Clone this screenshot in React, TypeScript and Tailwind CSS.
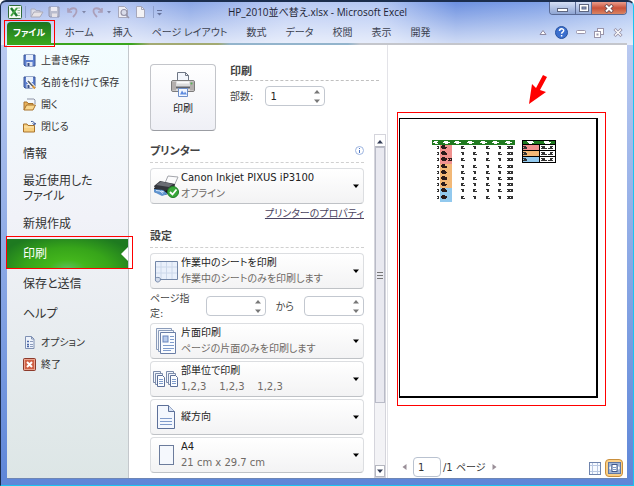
import { useId } from 'react'
import type { ReactNode } from 'react'

const tabs = ['ホーム', '挿入', 'ページ レイアウト', '数式', 'データ', '校閲', '表示', '開発']

/* ---------- small icons ---------- */

function ExcelIcon() {
  return (
    <svg width="14" height="14" viewBox="0 0 14 14">
      <rect x="0.5" y="0.5" width="13" height="13" rx="1" fill="#f4faf2" stroke="#2f6b3a" />
      <path d="M9 3h3M9.5 5.5H12M9.5 8H12M9 10.5h3" stroke="#8fb58f" />
      <path d="M3 3l6 8" stroke="#1d7a2d" strokeWidth="2.4" />
      <path d="M9 3l-6 8" stroke="#45a543" strokeWidth="2" />
    </svg>
  )
}

function QuickIcons() {
  return (
    <svg width="142" height="16" viewBox="0 0 142 16" fill="none">
      <path d="M2.5 2v12" stroke="#8fa0cc" />
      {/* open */}
      <path d="M8 13V5h4l1 1.500h4V8" fill="#dcdde6" stroke="#a9acbf" />
      <path d="M8 13l3-5h9l-3 5z" fill="#e6e2e4" stroke="#aaa9b8" />
      {/* save */}
      <path d="M26 3h10v10H27l-1-1z" fill="#b9bccd" stroke="#9396ae" />
      <path d="M28 3h6v4h-6z" fill="#eceaf2" />
      <path d="M29 9.500h5V13h-5z" fill="#e6e2e6" />
      {/* undo */}
      <path d="M45 4v4h4" stroke="#ab9fb9" strokeWidth="1.600" />
      <path d="M45.500 7.500c2-4 8-4.500 8-.5 0 2-1.500 4-3.500 6" stroke="#ab9fb9" strokeWidth="1.800" />
      <path d="M59 7h4l-2 2.500z" fill="#8087a8" />
      {/* redo */}
      <path d="M79 4v4h-4" stroke="#ab9fb9" strokeWidth="1.600" />
      <path d="M78.500 7.500c-2-4-8-4.500-8-.5 0 2 1.500 4 3.500 6" stroke="#ab9fb9" strokeWidth="1.800" />
      <path d="M84 7h4l-2 2.500z" fill="#8087a8" />
      {/* preview */}
      <path d="M95.500 2.500h6l3 3v8h-9z" fill="#efeef4" stroke="#a7a8bb" />
      <circle cx="101" cy="8.500" r="3" fill="#d9dcea" stroke="#9694a8" strokeWidth="1.200" />
      <path d="M103 11l3 3" stroke="#9694a8" strokeWidth="1.600" />
      {/* new */}
      <path d="M113.500 2.500h5l3 3v8h-8z" fill="#f3f2f5" stroke="#a7a8bb" />
      <path d="M118.500 2.500v3h3" stroke="#a7a8bb" />
      <path d="M130.500 2v12" stroke="#8fa0cc" />
      <path d="M134 6.500h5" stroke="#66729c" />
      <path d="M134 9h5l-2.500 2.500z" fill="#66729c" />
    </svg>
  )
}

function SaveIcon({ pen = false }: { pen?: boolean }) {
  return (
    <svg width="13" height="13" viewBox="0 0 13 13">
      <path d="M1 1h11v11H2l-1-1z" fill="#5d80cf" stroke="#3c5696" />
      <rect x="3" y="1" width="7" height="5" fill="#e8f0fc" />
      <path d="M3.500 8h6v4h-6z" fill="#dfe5f2" />
      <path d="M4.500 9h2v3h-2z" fill="#394f85" />
      {pen && (
        <>
          <path d="M5 5l6.500 7" stroke="#fff" strokeWidth="3.400" />
          <path d="M5 5l6 6.500" stroke="#555b66" strokeWidth="1.600" />
          <path d="M9.500 10l2.500 2.500" stroke="#d8973a" strokeWidth="2" />
        </>
      )}
    </svg>
  )
}

function OpenIcon() {
  return (
    <svg width="13" height="13" viewBox="0 0 13 13">
      <path d="M4 1h7l1 1v4" fill="#f4f7fc" stroke="#8c93a5" />
      <path d="M1 12V4h3l1 1.500h5V8" fill="#e8b35c" stroke="#a8732c" />
      <path d="M1 12l2.500-5H12.500l-2.500 5z" fill="#f9d88f" stroke="#a8732c" />
    </svg>
  )
}

function CloseFolderIcon() {
  return (
    <svg width="13" height="13" viewBox="0 0 13 13">
      <path d="M.5 12V4h3.500l1 1.500h6.500V12z" fill="#f7cf7f" stroke="#a8732c" />
      <path d="M1 7h10" stroke="#fdeab9" />
      <path d="M8 1.500c2-.5 3.500.5 3.500 3M11.500 5l-2-1.500M11.500 5l1.500-2" stroke="#3c5696" fill="none" />
    </svg>
  )
}

function OptionIcon() {
  return (
    <svg width="13" height="13" viewBox="0 0 13 13">
      <path d="M2.500.5h6l2.500 2.500v9.500H2.500z" fill="#eef3fb" stroke="#7f90b3" />
      <path d="M8.500.5V3H11" fill="none" stroke="#7f90b3" />
      <path d="M4 5.500h2M4 8.500h2M4 10.500h2" stroke="#4a68a8" strokeWidth="1.400" />
      <path d="M7 5.500h3M7 8.500h3M7 10.500h3" stroke="#8c9cbd" />
    </svg>
  )
}

function ExitIcon() {
  return (
    <svg width="13" height="13" viewBox="0 0 13 13">
      <rect x=".5" y=".5" width="12" height="12" rx="1" fill="#cf6044" stroke="#8c3a2b" />
      <rect x="1.500" y="1.500" width="10" height="10" fill="none" stroke="#eba48f" />
      <path d="M4 4l5 5M9 4l-5 5" stroke="#fff" strokeWidth="2" />
    </svg>
  )
}

function Triangle({ dir, className = '' }: { dir: 'up' | 'down' | 'left' | 'right'; className?: string }) {
  const d = {
    up: 'M0 5.500h6l-3-3.500z',
    down: 'M0 1.500h6l-3 3.500z',
    left: 'M5.500 0v6l-4-3z',
    right: 'M.5 0v6l4-3z',
  }[dir]
  return (
    <svg width="6" height="6" viewBox="0 0 6 6" className={className}>
      <path d={d} fill="currentColor" />
    </svg>
  )
}

/* ---------- large icons ---------- */

function PrinterIcon() {
  return (
    <svg width="24" height="25" viewBox="0 0 24 25">
      <path d="M6.500 9V.5h8l3 3V9z" fill="#f3f6fc" stroke="#6e7685" />
      <path d="M14.500.5v3h3" fill="none" stroke="#6e7685" />
      <rect x=".5" y="8.500" width="23" height="11" rx="1.500" fill="#dcdcdc" stroke="#7d7c7c" />
      <path d="M1 9.500h4v9H1zM19 9.500h4v9h-4z" fill="#b3aeac" />
      <path d="M6 10.500h12" stroke="#fafafa" strokeWidth="2" />
      <path d="M5 14.500h14v2H5z" fill="#62646b" />
      <path d="M7.500 16.500h9v8h-9z" fill="#f2f7ff" stroke="#6e8fc9" />
      <path d="M9 22.500l2-4 2 3 1-2 2 3z" fill="#5d8be0" />
      <circle cx="20.500" cy="11.500" r="1" fill="#55b355" />
    </svg>
  )
}

function DeviceIcon() {
  return (
    <svg width="26" height="23" viewBox="0 0 26 23">
      <path d="M12 8l3-7 10 1-4 9z" fill="#fbfbfc" stroke="#a3a5ab" />
      <path d="M1 11l6-5 15 3-1 6-8 4-10-3z" fill="#33363c" />
      <path d="M3 10l5-3.500 12 2.500-4 3z" fill="#6a6d74" />
      <path d="M1 13l11 3 7-3v4l-7 3-11-3z" fill="#17191d" />
      <path d="M1 14l9 1 5 4-6 2-8-4z" fill="#5f93cf" />
      <path d="M3 15.500l4 .5 3 2.500M8 16l3 1" stroke="#d7e9fa" fill="none" />
      <circle cx="20" cy="17" r="5.500" fill="#39a839" stroke="#1f7c26" />
      <path d="M17 17l2.500 2.500 4-5" stroke="#fff" strokeWidth="1.800" fill="none" />
    </svg>
  )
}

function SheetIcon() {
  return (
    <svg width="25" height="23" viewBox="0 0 25 23">
      <path d="M1.500 1.500h22v18H5.500V21H1.500z" fill="#e9f0fb" />
      <path d="M1.500 7h22M1.500 13h22M7 1.500v18M12.500 1.500v18M18 1.500v18" stroke="#ccd8ea" />
      <path d="M1.500 19V1.500h22v18H6" fill="none" stroke="#7387a8" />
      <path d="M1.500 18.500c0-1.500 5-1.500 5 .5s-1.500 3-3 3-2.500-1.500-2-3.500z" fill="#d3dcec" stroke="#7387a8" />
    </svg>
  )
}

function OneSideIcon() {
  return (
    <svg width="22" height="26" viewBox="0 0 22 26">
      <path d="M1.500.5h15v21h-15z" fill="#f1f5fc" stroke="#8b9cba" />
      <path d="M3.500 2.500h15v21h-15z" fill="#f6f9fe" stroke="#8b9cba" />
      <path d="M5.500 4.500h15v21h-15z" fill="#fafcff" stroke="#6a7ea6" />
      <rect x="8" y="8" width="5" height="6" fill="#b8cbec" stroke="#6a86bd" />
      <path d="M15 8.500h4M15 11.500h4M15 14.500h4M8 17.500h11M8 20.500h11M8 22.500h8" stroke="#7f9bcb" />
    </svg>
  )
}

function StackedPages() {
  return (
    <>
      <path d="M.5.5h7v11h-7z" fill="#f1f5fc" stroke="#7d8dab" />
      <path d="M2.500 2.500h7v11h-7z" fill="#f1f5fc" stroke="#7d8dab" />
      <path d="M4.500 4.500h5l2 2v9h-7z" fill="#fbfdff" stroke="#5d7099" />
      <path d="M6 8.500h4M6 10.500h4M6 12.500h4" stroke="#7f9bcb" />
    </>
  )
}

function CollateIcon() {
  return (
    <svg width="26" height="16" viewBox="0 0 26 16">
      <StackedPages />
      <g transform="translate(13 0)">
        <StackedPages />
      </g>
    </svg>
  )
}

function PortraitIcon() {
  return (
    <svg width="18" height="24" viewBox="0 0 18 24">
      <path d="M.5.5h11l6 6v17H.5z" fill="#f3f7fe" stroke="#5d7099" />
      <path d="M11.500.5v6h6" fill="#d6e1f4" stroke="#5d7099" />
      <path d="M3 13.500h12M3 16.500h12M3 19.500h12" stroke="#7f9bcb" />
    </svg>
  )
}

function PaperIcon() {
  return (
    <svg width="15" height="20" viewBox="0 0 15 20">
      <rect x=".5" y=".5" width="14" height="19" fill="#f5f8fd" stroke="#6c7c9c" />
    </svg>
  )
}

/* ---------- form parts ---------- */

function Spinner({ id, value = '' }: { id: string; value?: string }) {
  return (
    <span className="flex h-5 w-[60px] items-center rounded-sm border border-[#c3c8d0] bg-white pr-1">
      <input
        id={id}
        type="text"
        defaultValue={value}
        className="min-w-0 flex-1 bg-transparent pl-1 text-[10px] text-[#222] outline-none"
      />
      <span className="flex flex-col gap-1 text-[#777]">
        <button type="button" aria-label="増やす" className="block">
          <Triangle dir="up" className="block" />
        </button>
        <button type="button" aria-label="減らす" className="block">
          <Triangle dir="down" className="block" />
        </button>
      </span>
    </span>
  )
}

function Picker({ icon, title, note }: { icon: ReactNode; title: string; note?: string }) {
  return (
    <label className="flex h-9 items-center rounded-sm border border-[#dcdee1] border-b-[#bfc2c6] bg-linear-to-b from-white to-[#f3f3f4] pr-1">
      <span className="flex w-[30px] shrink-0 justify-center">{icon}</span>
      <span className="flex min-w-0 flex-1 flex-col">
        <select className="h-4 w-full appearance-none bg-transparent text-[10px] leading-4 text-[#222] outline-none">
          <option>{title}</option>
        </select>
        {note && <span className="text-[10px] leading-4 whitespace-pre text-[#6f6a66]">{note}</span>}
      </span>
      <Triangle dir="down" className="shrink-0 text-black" />
    </label>
  )
}

function SectionTitle({ children }: { children: ReactNode }) {
  return (
    <h2 className="border-b border-dashed border-[#d0d0d0] pt-0.5 pb-0.5 text-[11px] leading-4 font-bold text-[#444]">
      {children}
    </h2>
  )
}

/* ---------- title bar and ribbon ---------- */

function TitleBar() {
  return (
    <div className="flex h-5 items-start">
      <div className="flex flex-1 items-center gap-px pt-0.5 pl-px">
        <ExcelIcon />
        <QuickIcons />
      </div>
      <h1 className="pt-0.5 text-[10px] leading-4 whitespace-nowrap text-[#1c2333]">
        HP_2010並べ替え.xlsx - Microsoft Excel
      </h1>
      <div className="flex flex-1 justify-end">
        <div className="flex h-[13px] overflow-hidden rounded-b-sm border border-t-0 border-[#5a6a94]">
          <button
            type="button"
            aria-label="最小化"
            className="flex w-[26px] items-center justify-center border-r border-[#5a6a94] bg-linear-to-b from-[#d5dff5] to-[#8ea4d2]"
          >
            <svg width="11" height="8" viewBox="0 0 11 8">
              <rect x=".5" y="4.500" width="10" height="3" fill="#fff" stroke="#5e6680" />
            </svg>
          </button>
          <button
            type="button"
            aria-label="元に戻す"
            className="flex w-[16px] items-center justify-center border-r border-[#5a6a94] bg-linear-to-b from-[#d5dff5] to-[#8ea4d2]"
          >
            <svg width="10" height="8" viewBox="0 0 10 8">
              <rect x=".5" y=".5" width="9" height="7" fill="#fff" stroke="#5e6680" />
              <rect x="3" y="3" width="4" height="2" fill="#8ea4d2" stroke="#5e6680" />
            </svg>
          </button>
          <button
            type="button"
            aria-label="閉じる"
            className="flex w-[34px] items-center justify-center bg-linear-to-b from-[#eb9d8c] via-[#c9513a] to-[#d98462]"
          >
            <svg width="10" height="9" viewBox="0 0 10 9">
              <path d="M1.500 1l7 7M8.500 1l-7 7" stroke="#6b4a50" strokeWidth="3.600" />
              <path d="M2 1.500l6 6M8 1.500l-6 6" stroke="#fff" strokeWidth="2" />
            </svg>
          </button>
        </div>
      </div>
    </div>
  )
}

function Ribbon() {
  return (
    <nav className="flex h-[21px] items-stretch">
      <div className="relative w-11">
        <a
          href="#file"
          className="flex h-full items-center justify-center rounded-t-sm bg-linear-to-b from-[#1b741f] to-[#3aa51d] text-[9px] font-bold text-white"
        >
          ファイル
        </a>
        <span className="absolute -top-0.5 -right-1 -bottom-1 -left-[3px] border border-[#f00]" />
      </div>
      <div className="flex items-center gap-[19px] pl-3.5">
        {tabs.map((tab) => (
          <a key={tab} href="#tab" className="text-[10px] whitespace-nowrap text-[#3c4250]">
            {tab}
          </a>
        ))}
      </div>
      <div className="ml-auto flex items-center gap-2 pr-1">
        <svg width="8" height="7" viewBox="0 0 8 7">
          <path d="M1 5.500L4 1.500l3 4z" fill="#fff" stroke="#8d88a0" />
        </svg>
        <svg width="13" height="13" viewBox="0 0 13 13">
          <circle cx="6.500" cy="6.500" r="6" fill="#3b6fce" stroke="#27529f" />
          <path
            d="M4.500 5c0-3 4.200-2.800 4.200-.4 0 1.500-2.100 1.500-2.100 3.100M6.600 9v1.500"
            stroke="#fff"
            strokeWidth="1.500"
            fill="none"
          />
        </svg>
        <svg width="10" height="5" viewBox="0 0 10 5">
          <rect x=".5" y=".5" width="9" height="3" rx="1" fill="#fff" stroke="#9a95aa" />
        </svg>
        <svg width="11" height="10" viewBox="0 0 11 10">
          <rect x="3.500" y=".5" width="6" height="6" fill="#fff" stroke="#9a95aa" />
          <rect x=".5" y="3.500" width="6" height="6" fill="#fff" stroke="#9a95aa" />
          <rect x="2.500" y="5.500" width="2" height="2" fill="#9a95aa" />
        </svg>
        <svg width="10" height="9" viewBox="0 0 10 9">
          <path d="M1.500 1l7 7M8.500 1l-7 7" stroke="#9a95aa" strokeWidth="3" />
          <path d="M2 1.500l6 6M8 1.500l-6 6" stroke="#fff" strokeWidth="1.200" />
        </svg>
      </div>
    </nav>
  )
}

/* ---------- left menu ---------- */

function MenuCommand({ icon, label }: { icon: ReactNode; label: string }) {
  return (
    <a href="#command" className="flex h-[22px] items-center gap-[5px] pl-4 text-[10px] whitespace-nowrap text-[#333]">
      {icon}
      {label}
    </a>
  )
}

function MenuPage({ children }: { children: ReactNode }) {
  return (
    <a href="#page" className="flex min-h-[30px] items-center py-[5px] pl-4 text-[12px] leading-[15px] text-[#333]">
      <span>{children}</span>
    </a>
  )
}

function Sidebar() {
  return (
    <aside className="w-[122px] shrink-0 border-r border-[#c4c8cc] bg-linear-to-b from-[#f3fdff] via-[#f1f2f8] via-40% to-[#dde6e6] pt-1">
      <MenuCommand icon={<SaveIcon />} label="上書き保存" />
      <MenuCommand icon={<SaveIcon pen />} label="名前を付けて保存" />
      <MenuCommand icon={<OpenIcon />} label="開く" />
      <MenuCommand icon={<CloseFolderIcon />} label="閉じる" />
      <div className="py-0.5">
        <MenuPage>情報</MenuPage>
        <MenuPage>
          最近使用した
          <br />
          ファイル
        </MenuPage>
        <MenuPage>新規作成</MenuPage>
        <div className="relative">
          <a
            href="#print"
            className="flex h-[30px] items-center justify-between bg-[radial-gradient(ellipse_at_bottom,#5cc05c_0%,#43b51c_22%,#37a51a_50%,#1e7a20_85%)] pl-4 text-[12px] text-white"
          >
            印刷
            <svg width="7" height="14" viewBox="0 0 7 14">
              <path d="M7 0v14L0 7z" fill="#fff" />
            </svg>
          </a>
          <span className="absolute -top-[3px] -right-[5px] bottom-0 -left-px border border-[#f00]" />
        </div>
        <MenuPage>保存と送信</MenuPage>
        <MenuPage>ヘルプ</MenuPage>
      </div>
      <MenuCommand icon={<OptionIcon />} label="オプション" />
      <MenuCommand icon={<ExitIcon />} label="終了" />
    </aside>
  )
}

/* ---------- print settings ---------- */

function ScrollBar() {
  return (
    <div className="flex w-3 shrink-0 flex-col border border-[#d5d5dc] bg-[#f3f3f6]">
      <button type="button" aria-label="上へ" className="flex h-3 items-center justify-center border-b border-[#b5b7c0] bg-white text-[#333c55]">
        <Triangle dir="up" />
      </button>
      <div className="flex h-64 flex-col items-center justify-center gap-0.5 border border-[#b9bbc7] bg-[#e9e9f0]">
        <span className="h-px w-1.5 bg-[#777]" />
        <span className="h-px w-1.5 bg-[#777]" />
        <span className="h-px w-1.5 bg-[#777]" />
      </div>
      <button type="button" aria-label="下へ" className="mt-auto flex h-3 items-center justify-center border border-[#b5b7c0] bg-white text-[#333c55]">
        <Triangle dir="down" />
      </button>
    </div>
  )
}

function PrintSettings() {
  const copies = useId()
  const from = useId()
  const to = useId()

  return (
    <section className="flex w-[259px] shrink-0 flex-col border-r border-[#e3e3e8] pt-[19px] pl-[21px]">
      <div className="flex gap-3.5 pr-2">
        <button
          type="button"
          className="flex h-[67px] w-[66px] flex-col items-center justify-center gap-1 rounded-sm border border-[#c3c5ca] border-b-[#9b9da3] bg-linear-to-b from-white to-[#eff0f6] pb-2 text-[10px] text-[#222]"
        >
          <PrinterIcon />
          印刷
        </button>
        <div className="flex-1">
          <h2 className="border-b border-dashed border-[#c0c0c0] text-[11px] leading-4 font-bold text-[#444]">印刷</h2>
          <div className="flex items-center gap-3 pt-[5px]">
            <label htmlFor={copies} className="text-[10px] text-[#444]">
              部数:
            </label>
            <Spinner id={copies} value="1" />
          </div>
        </div>
      </div>

      <div className="flex flex-1 gap-2.5 pt-[3px] pr-px">
        <div className="min-w-0 flex-1 pt-2">
          <div className="relative">
            <SectionTitle>プリンター</SectionTitle>
            <svg width="9" height="9" viewBox="0 0 9 9" className="absolute top-1 right-0">
              <circle cx="4.500" cy="4.500" r="4" fill="#fff" stroke="#9db4e0" />
              <path d="M4.500 2v1M4.500 4v3" stroke="#4f76c4" />
            </svg>
          </div>
          <div className="pt-[5px]">
            <Picker icon={<DeviceIcon />} title="Canon Inkjet PIXUS iP3100" note="オフライン" />
          </div>
          <p className="pt-0.5 text-right text-[10px] leading-4">
            <a href="#property" className="text-[#4b4360] underline">
              プリンターのプロパティ
            </a>
          </p>
          <div className="pt-[5px]">
            <SectionTitle>設定</SectionTitle>
          </div>
          <div className="flex flex-col gap-0.5 pt-[5px]">
            <Picker icon={<SheetIcon />} title="作業中のシートを印刷" note="作業中のシートのみを印刷します" />
            <div className="flex items-center justify-between text-[10px] text-[#444]">
              <label htmlFor={from} className="w-[42px] leading-[15px]">
                ページ指定:
              </label>
              <div className="flex items-center gap-2.5">
                <Spinner id={from} />
                <label htmlFor={to}>から</label>
                <Spinner id={to} />
              </div>
            </div>
            <Picker icon={<OneSideIcon />} title="片面印刷" note="ページの片面のみを印刷します" />
            <Picker icon={<CollateIcon />} title="部単位で印刷" note="1,2,3    1,2,3    1,2,3" />
            <Picker icon={<PortraitIcon />} title="縦方向" />
            <Picker icon={<PaperIcon />} title="A4" note="21 cm x 29.7 cm" />
          </div>
        </div>
        <ScrollBar />
      </div>
    </section>
  )
}

/* ---------- preview ---------- */

const rowFills = ['#f0918e', '#f0918e', '#f0918e', '#f2b877', '#f2b877', '#f2b877', '#f2b877', '#92c9ee', '#92c9ee']
const numberX = [29, 41, 54, 66]

// The printed sheet, reduced until its cells are only marks
function SheetThumbnail() {
  return (
    <svg width="125" height="62" viewBox="0 0 125 62" shapeRendering="crispEdges">
      <rect x="0" y="0" width="83" height="5" fill="#1f7a1f" />
      {[1, 11, 22, 35, 48, 60, 73].map((x, i) => (
        <path key={x} d={`M${x} 2.5h${i === 0 ? 4 : 7}M${x + 1} 1.5h4M${x + 2} 3.5h3`} stroke="#fff" />
      ))}
      {rowFills.map((fill, i) => {
        const y = 5 + Math.round(i * 6.2)
        return (
          <g key={i}>
            <rect x="8" y={y} width="12" height="7" fill={fill} />
            <path d={`M5 ${y + 1.5}h2M6 ${y + 2.5}h1M5 ${y + 3.5}h2`} stroke="#333" />
            <path
              d={`M10 ${y + 0.5}h3M9 ${y + 1.5}h${4 + (i % 3)}M9 ${y + 2.5}h6M10 ${y + 3.5}h${4 + (i % 2)}`}
              stroke="#2a1a1a"
            />
            {i === 2 && <path d={`M16 ${y + 1.5}h4M17 ${y + 2.5}h1M19 ${y + 2.5}h1M16 ${y + 3.5}h4`} stroke="#2a1a1a" />}
            {numberX.map((x, j) => (
              <path
                key={x}
                d={
                  (i + j) % 2
                    ? `M${x} ${y + 1.5}h3M${x + 1} ${y + 2.5}h2M${x + 1} ${y + 3.5}h2`
                    : `M${x} ${y + 1.5}h3M${x} ${y + 2.5}h2M${x} ${y + 3.5}h4`
                }
                stroke="#333"
              />
            ))}
            <path d={`M75 ${y + 1.5}h6M76 ${y + 2.5}h2M79 ${y + 2.5}h2M75 ${y + 3.5}h6`} stroke="#333" />
          </g>
        )
      })}

      <rect x="90" y="0" width="34" height="5" fill="#1f7a1f" />
      <path d="M95 1.5h6M96 2.5h6M97 3.5h3M112 1.500h5M112 2.500h7M113 3.500h5" stroke="#fff" />
      {['#f0918e', '#f2b877', '#92c9ee'].map((fill, i) => {
        const y = 4 + i * 6
        return (
          <g key={fill}>
            <rect x="90.5" y={y + 0.5} width="17" height="6" fill={fill} stroke="#000" />
            <rect x="107.5" y={y + 0.5} width="16" height="6" fill="#fff" stroke="#000" />
            <path
              d={`M91 ${y + 2.5}h3M92 ${y + 3.5}h3M91 ${y + 4.5}h4M109 ${y + 2.5}h4M110 ${y + 3.5}h3M109 ${y + 4.5}h6M116 ${y + 4.5}h1M118 ${y + 2.5}h3M118 ${y + 3.5}h2M117 ${y + 4.5}h4`}
              stroke="#333"
            />
          </g>
        )
      })}
      <path d="M90 .5h34M90.500 0v23M123.500 0v23" stroke="#000" />
    </svg>
  )
}

function Preview() {
  return (
    <section className="flex min-w-0 flex-1 flex-col bg-white">
      <div className="flex h-[67px] justify-center pt-[29px] pl-[60px]">
        <svg width="20" height="32" viewBox="0 0 20 32">
          <path d="M15 1l4 2-7 13 6 2L1 30 4 10l4 4z" fill="#f00" />
        </svg>
      </div>
      <div className="mr-[21px] ml-[9px] flex flex-1 border border-[#f00] pt-[5px] pr-[7px] pb-[7px] pl-px">
        <div className="min-w-0 flex-1 border border-r-2 border-b-2 border-black pt-[21px] pl-[32px]">
          <SheetThumbnail />
        </div>
      </div>
      <div className="flex h-[72px] items-end justify-between pr-1 pb-px pl-[13px] text-[10px] text-[#333]">
        <div className="flex h-5 items-center gap-1.5">
          <button type="button" aria-label="前のページ" className="text-[#9a8f98]">
            <Triangle dir="left" />
          </button>
          <label className="flex items-center gap-0.5 whitespace-nowrap">
            <input
              type="text"
              defaultValue="1"
              className="h-5 w-7 rounded-sm border border-[#b9c2d0] bg-white pl-1 text-[10px] outline-none"
            />
            /1 ページ
          </label>
          <button type="button" aria-label="次のページ" className="text-[#9a8f98]">
            <Triangle dir="right" />
          </button>
        </div>
        <div className="flex items-center gap-1">
          <button type="button" aria-label="余白の表示">
            <svg width="12" height="13" viewBox="0 0 12 13" className="block">
              <rect x=".5" y=".5" width="11" height="12" fill="#f7faff" stroke="#6f84ad" />
              <path d="M3.500 1v11M8.500 1v11M1 3.500h10M1 9.500h10" stroke="#b9c8e2" />
            </svg>
          </button>
          <button
            type="button"
            aria-label="ページに合わせる"
            className="flex h-[18px] w-[18px] items-center justify-center rounded-sm border border-[#c98f3d] bg-[#fbcf86]"
          >
            <svg width="13" height="12" viewBox="0 0 13 12">
              <rect x=".5" y=".5" width="12" height="11" fill="#9fb4d6" stroke="#5f76a2" />
              <rect x="4" y="2.500" width="5" height="7" fill="#fff" stroke="#41588a" />
              <path d="M1 6l2-2v4zM12 6l-2-2v4z" fill="#fff" />
              <path d="M5 5.500h3M5 7.500h3" stroke="#7d9ac6" />
            </svg>
          </button>
        </div>
      </div>
    </section>
  )
}

export default function App() {
  return (
    <div className="flex min-h-screen flex-col rounded-t-md border border-t-2 border-[#1b2d4d] border-r-[#19c5f0] border-b-[#19c5f0] bg-[linear-gradient(to_right,#9db3ea,#b5c6f1_18%,#8aa6e6_30%,#b9caf3_45%,#b4c7f3_60%,#6c90e0_72%,#7fa0e6_85%,#a9c2f2)] font-['Open_Sans','Noto_Sans_CJK_JP',sans-serif] [font-feature-settings:'palt']">
      <header className="bg-linear-to-b from-transparent via-white/50 via-70% to-white/70 px-1.5">
        <TitleBar />
        <Ribbon />
        <div className="h-0.5 bg-[linear-gradient(to_right,#3aa51d_20%,#a3aa72_23%,#a3aa72_34%,#93b4cc_36%,#93b4cc_55%,#c4c6cc_57%)]" />
      </header>
      <div className="flex flex-1 bg-linear-to-b from-[#b9c9f0] to-[#5e86d8] px-1.5 pb-1.5">
        <main className="flex min-w-0 flex-1 border-b border-[#6e86b5] bg-white font-['DejaVu_Sans','Noto_Sans_CJK_JP',sans-serif]">
          <Sidebar />
          <PrintSettings />
          <Preview />
        </main>
      </div>
    </div>
  )
}
